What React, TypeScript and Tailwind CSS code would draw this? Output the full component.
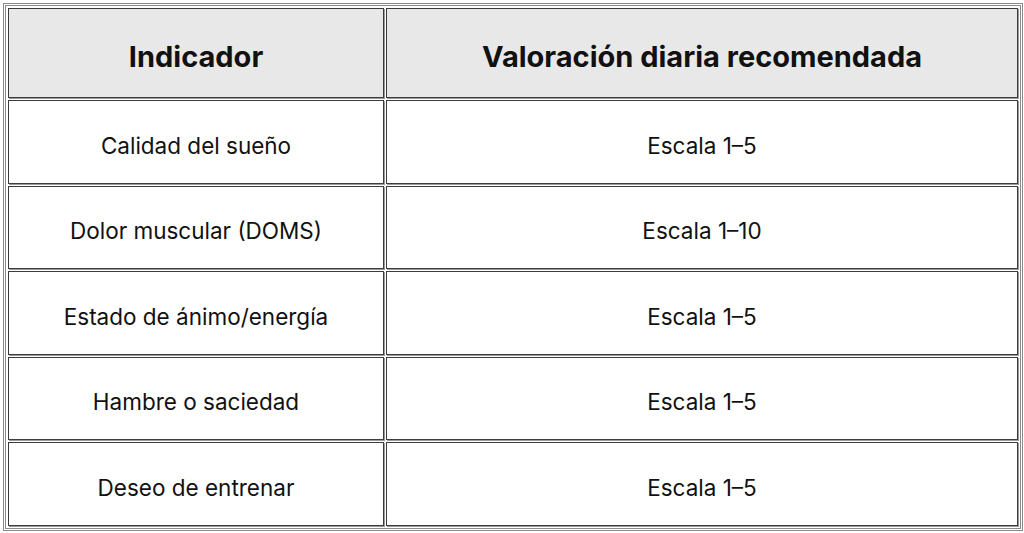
const rows = [
  { indicador: "Calidad del sueño", valor: "Escala 1–5" },
  { indicador: "Dolor muscular (DOMS)", valor: "Escala 1–10" },
  { indicador: "Estado de ánimo/energía", valor: "Escala 1–5" },
  { indicador: "Hambre o saciedad", valor: "Escala 1–5" },
  { indicador: "Deseo de entrenar", valor: "Escala 1–5" },
];

const cell =
  "border border-[#3c3c3c] shadow-[1px_1px_0_#9a9a9a] text-center align-middle pt-[8px]";

export default function App() {
  return (
    <div className="min-h-screen bg-white p-[3px] font-['Inter',sans-serif] text-[#111]">
      <table className="w-[1020px] border-separate border-spacing-[2px] border-[3px] border-double border-[#8a8a8a]">
        <thead>
          <tr>
            <th className={`${cell} h-[90px] w-[376px] bg-[#e8e8e8] text-[29px] font-bold`}>
              Indicador
            </th>
            <th className={`${cell} h-[90px] bg-[#e8e8e8] text-[29px] font-bold`}>
              Valoración diaria recomendada
            </th>
          </tr>
        </thead>
        <tbody>
          {rows.map((row) => (
            <tr key={row.indicador}>
              <td className={`${cell} h-[83.5px] text-[22.5px]`}>{row.indicador}</td>
              <td className={`${cell} h-[83.5px] text-[22.5px]`}>{row.valor}</td>
            </tr>
          ))}
        </tbody>
      </table>
    </div>
  );
}
